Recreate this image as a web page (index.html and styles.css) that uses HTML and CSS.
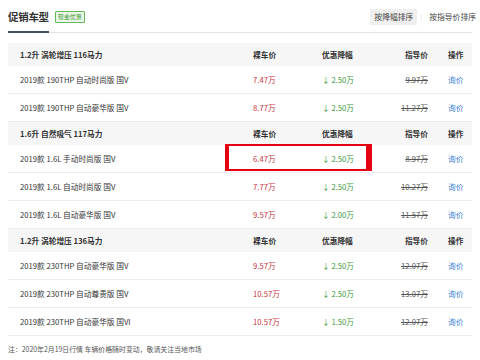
FILE: index.html
```html
<!DOCTYPE html>
<html>
<head>
<meta charset="utf-8">
<link rel="stylesheet" href="styles.css">
</head>
<body>
<div class="page">
  <div class="top">
    <div class="title-wrap">
      <span class="title">促销车型</span>
      <span class="tag">现金优惠</span>
    </div>
    <div class="sorts">
      <span class="sort active">按降幅排序</span>
      <span class="sep">|</span>
      <span class="sort">按指导价排序</span>
    </div>
  </div>
  <div class="table">
    <div class="row group"><span class="name">1.2升 涡轮增压 116马力</span><span class="c2">裸车价</span><span class="c3">优惠降幅</span><span class="c4">指导价</span><span class="c5">操作</span></div>
    <div class="row"><span class="name">2019款 190THP 自动时尚版 国V</span><span class="c2 red">7.47万</span><span class="c3 green">↓ 2.50万</span><span class="c4 del">9.97万</span><span class="c5 link">询价</span></div>
    <div class="row"><span class="name">2019款 190THP 自动豪华版 国V</span><span class="c2 red">8.77万</span><span class="c3 green">↓ 2.50万</span><span class="c4 del">11.27万</span><span class="c5 link">询价</span></div>
    <div class="row group"><span class="name">1.6升 自然吸气 117马力</span><span class="c2">裸车价</span><span class="c3">优惠降幅</span><span class="c4">指导价</span><span class="c5">操作</span></div>
    <div class="row"><span class="name">2019款 1.6L 手动时尚版 国V</span><span class="c2 red">6.47万</span><span class="c3 green">↓ 2.50万</span><span class="c4 del">8.97万</span><span class="c5 link">询价</span></div>
    <div class="row"><span class="name">2019款 1.6L 自动时尚版 国V</span><span class="c2 red">7.77万</span><span class="c3 green">↓ 2.50万</span><span class="c4 del">10.27万</span><span class="c5 link">询价</span></div>
    <div class="row"><span class="name">2019款 1.6L 自动豪华版 国V</span><span class="c2 red">9.57万</span><span class="c3 green">↓ 2.00万</span><span class="c4 del">11.57万</span><span class="c5 link">询价</span></div>
    <div class="row group"><span class="name">1.2升 涡轮增压 136马力</span><span class="c2">裸车价</span><span class="c3">优惠降幅</span><span class="c4">指导价</span><span class="c5">操作</span></div>
    <div class="row"><span class="name">2019款 230THP 自动豪华版 国V</span><span class="c2 red">9.57万</span><span class="c3 green">↓ 2.50万</span><span class="c4 del">12.07万</span><span class="c5 link">询价</span></div>
    <div class="row"><span class="name">2019款 230THP 自动尊贵版 国V</span><span class="c2 red">10.57万</span><span class="c3 green">↓ 2.50万</span><span class="c4 del">13.07万</span><span class="c5 link">询价</span></div>
    <div class="row"><span class="name">2019款 230THP 自动豪华版 国VI</span><span class="c2 red">10.57万</span><span class="c3 green">↓ 1.50万</span><span class="c4 del">12.07万</span><span class="c5 link">询价</span></div>
  </div>
  <div class="note">注：2020年2月19日行情 车辆价格随时变动，敬请关注当地市场</div>
  <div class="highlight"></div>
</div>
</body>
</html>
```

FILE: styles.css
```css
* { box-sizing: border-box; margin: 0; padding: 0; }
body {
  width: 480px;
  height: 360px;
  overflow: hidden;
  background: #fff;
  font-family: "Noto Sans CJK SC", "Liberation Sans", sans-serif;
  color: #333;
}
.page {
  position: relative;
  padding: 0 8px;
}
.top {
  display: flex;
  justify-content: space-between;
  align-items: stretch;
  height: 33px;
  border-bottom: 1px solid #e3e3e3;
}
.title-wrap {
  display: flex;
  align-items: stretch;
  gap: 6px;
}
.title {
  display: flex;
  align-items: center;
  padding-top: 2px;
  font-size: 10.5px;
  font-weight: 700;
  color: #333;
  letter-spacing: -0.3px;
  border-bottom: 2px solid #46505e;
  margin-bottom: -1px;
}
.tag {
  align-self: center;
  margin-top: 1px;
  font-size: 6px;
  line-height: 10px;
  padding: 0 2px;
  color: #3f9b3f;
  background: #eaf6e6;
  border: 1px solid #63b95a;
  border-radius: 1px;
}
.sorts {
  display: flex;
  align-items: center;
  gap: 3px;
  margin-right: -8px;
  font-size: 7.8px;
  color: #444;
  padding-top: 2px;
}
.sort {
  padding: 3px 4px;
  line-height: 10px;
}
.sort.active {
  background: #efefef;
}
.sep {
  color: #ddd;
  font-size: 7px;
}
.table {
  margin-top: 10px;
}
.row {
  display: grid;
  grid-template-columns: 245px 69px 58px 48px 44px;
  align-items: center;
  height: 28px;
  border-bottom: 1px solid #ececec;
  font-size: 7.7px;
  color: #333;
}
.row.group {
  height: 23px;
  background: #f6f6f7;
  font-weight: 700;
  border-bottom: none;
}
.name { padding-left: 12px; }
.c4 { text-align: right; }
.c5 { padding-left: 20px; }
.red { color: #c8343c; }
.green { color: #3c9a3c; }
.del { color: #555; text-decoration: line-through; }
.link { color: #3a7fd5; }
.note {
  font-size: 6.9px;
  color: #555;
  padding-top: 8px;
}
.highlight {
  position: absolute;
  left: 225px;
  top: 144px;
  width: 147px;
  height: 27px;
  border-style: solid;
  border-color: #e60012;
  border-width: 2px 6px 2px 4px;
}
```
